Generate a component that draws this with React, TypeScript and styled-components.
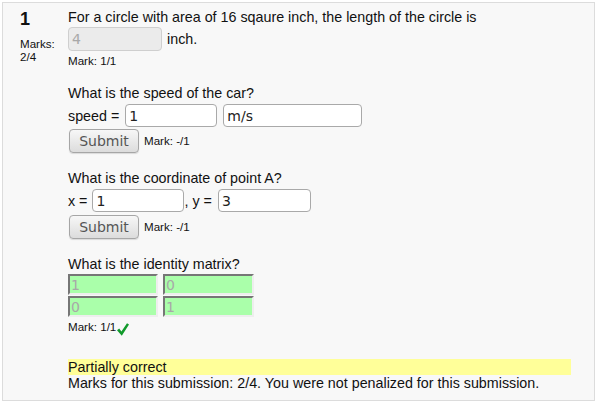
import React from 'react'
import styled, { createGlobalStyle } from 'styled-components'

const GlobalStyle = createGlobalStyle`
  body {
    margin: 0;
    background: #ffffff;
    font-family: "Liberation Sans", Arial, sans-serif;
    color: #111111;
  }
`

const Que = styled.div`
  margin: 2px;
  width: 593px;
  height: 399px;
  box-sizing: border-box;
  border: 1px solid #dcdcdc;
  background: #f8f8f8;
  display: flex;
  padding-top: 4px;
`

const Info = styled.div`
  width: 48px;
  padding-left: 17px;
  padding-top: 2px;
`

const QNo = styled.h3`
  margin: 0;
  font-size: 18px;
  line-height: 21px;
  font-weight: bold;
`

const Grade = styled.div`
  margin-top: 7px;
  font-size: 11.6px;
  line-height: 13px;
`

const Content = styled.div`
  width: 503px;
  font-size: 14.3px;
  line-height: 20px;
`

const QText = styled.div<{ $top?: number }>`
  margin-top: ${p => p.$top || 0}px;
  line-height: 20px;
`

const Row = styled.div<{ $top?: number }>`
  display: flex;
  align-items: center;
  margin-top: ${p => p.$top || 0}px;
  white-space: pre;
`

const Input = styled.input<{ $w: number; $h?: number; $ml?: number }>`
  box-sizing: border-box;
  width: ${p => p.$w}px;
  height: ${p => p.$h || 23}px;
  margin: 0 0 0 ${p => p.$ml || 0}px;
  padding: 0 3px;
  border: 1px solid #a9a9a9;
  border-radius: 4px;
  background: #ffffff;
  font-family: "DejaVu Sans", Verdana, sans-serif;
  font-size: 14px;
  color: #222222;
  outline: none;

  &:disabled {
    background: #ebebeb;
    border-color: #cfcfcf;
    color: #a8a8a8;
  }
`

const Unit = styled.span<{ $ml?: number }>`
  margin-left: ${p => p.$ml || 0}px;
`

const Mark = styled.div<{ $top?: number }>`
  margin-top: ${p => p.$top || 0}px;
  height: 14px;
  font-size: 11.6px;
  line-height: 14px;
  display: flex;
  align-items: center;
`

const SubmitButton = styled.button`
  box-sizing: border-box;
  width: 70px;
  height: 24px;
  margin: 0 5px 0 1px;
  padding: 0;
  border: 1px solid #a6a6a6;
  border-radius: 4px;
  background: linear-gradient(#f7f7f7, #dcdcdc);
  font-family: "DejaVu Sans", Verdana, sans-serif;
  font-size: 14px;
  color: #555555;
  box-shadow: 0 1px 1px rgba(0, 0, 0, 0.12);
`

const Matrix = styled.div`
  display: grid;
  grid-template-columns: 90px 91px;
  column-gap: 5px;
  row-gap: 1px;
  width: max-content;
`

const Cell = styled.input`
  box-sizing: border-box;
  width: 100%;
  height: 21px;
  margin: 0;
  padding: 0 1px;
  border: 2px solid;
  border-color: #767676 #eeeeee #eeeeee #767676;
  background: #aaffaa;
  font-family: "DejaVu Sans", Verdana, sans-serif;
  font-size: 14px;
  color: #a8a8a8;
`

const Feedback = styled.div`
  margin-top: 25px;
  line-height: 16px;
`

const State = styled.div`
  background: #ffff99;
`

const TickIcon = styled.svg`
  margin-left: 1px;
  margin-top: 4px;
  flex: none;
`

const Tick = () => (
  <TickIcon width="12" height="13" viewBox="0 0 12 13">
    <path d="M0 7.2 L2.2 5.6 L4.4 8.6 L10 0.2 L12 1.6 L4.8 12.8 Z" fill="#119a2b" />
  </TickIcon>
)

export default function App() {
  return (
    <>
      <GlobalStyle />
      <Que>
        <Info>
          <QNo>1</QNo>
          <Grade>
            Marks:
            <br />
            2/4
          </Grade>
        </Info>
        <Content>
          <QText>For a circle with area of 16 sqaure inch, the length of the circle is</QText>
          <Row>
            <Input $w={94} $h={24} value="4" disabled readOnly />
            <Unit $ml={5}>inch.</Unit>
          </Row>
          <Mark $top={3}>Mark: 1/1</Mark>

          <QText $top={15}>What is the speed of the car?</QText>
          <Row $top={1}>
            <span>speed =</span>
            <Input $w={92} $ml={6} defaultValue="1" />
            <Input $w={139} $ml={6} defaultValue="m/s" />
          </Row>
          <Row $top={2}>
            <SubmitButton>Submit</SubmitButton>
            <Mark>Mark: -/1</Mark>
          </Row>

          <QText $top={15}>What is the coordinate of point A?</QText>
          <Row $top={1}>
            <span>x =</span>
            <Input $w={92} $ml={5} defaultValue="1" />
            <span>, y =</span>
            <Input $w={93} $ml={6} defaultValue="3" />
          </Row>
          <Row $top={3}>
            <SubmitButton>Submit</SubmitButton>
            <Mark>Mark: -/1</Mark>
          </Row>

          <QText $top={15}>What is the identity matrix?</QText>
          <Matrix>
            <Cell value="1" readOnly />
            <Cell value="0" readOnly />
            <Cell value="0" readOnly />
            <Cell value="1" readOnly />
          </Matrix>
          <Mark $top={3}>
            Mark: 1/1
            <Tick />
          </Mark>

          <Feedback>
            <State>Partially correct</State>
            <div>Marks for this submission: 2/4. You were not penalized for this submission.</div>
          </Feedback>
        </Content>
      </Que>
    </>
  )
}
